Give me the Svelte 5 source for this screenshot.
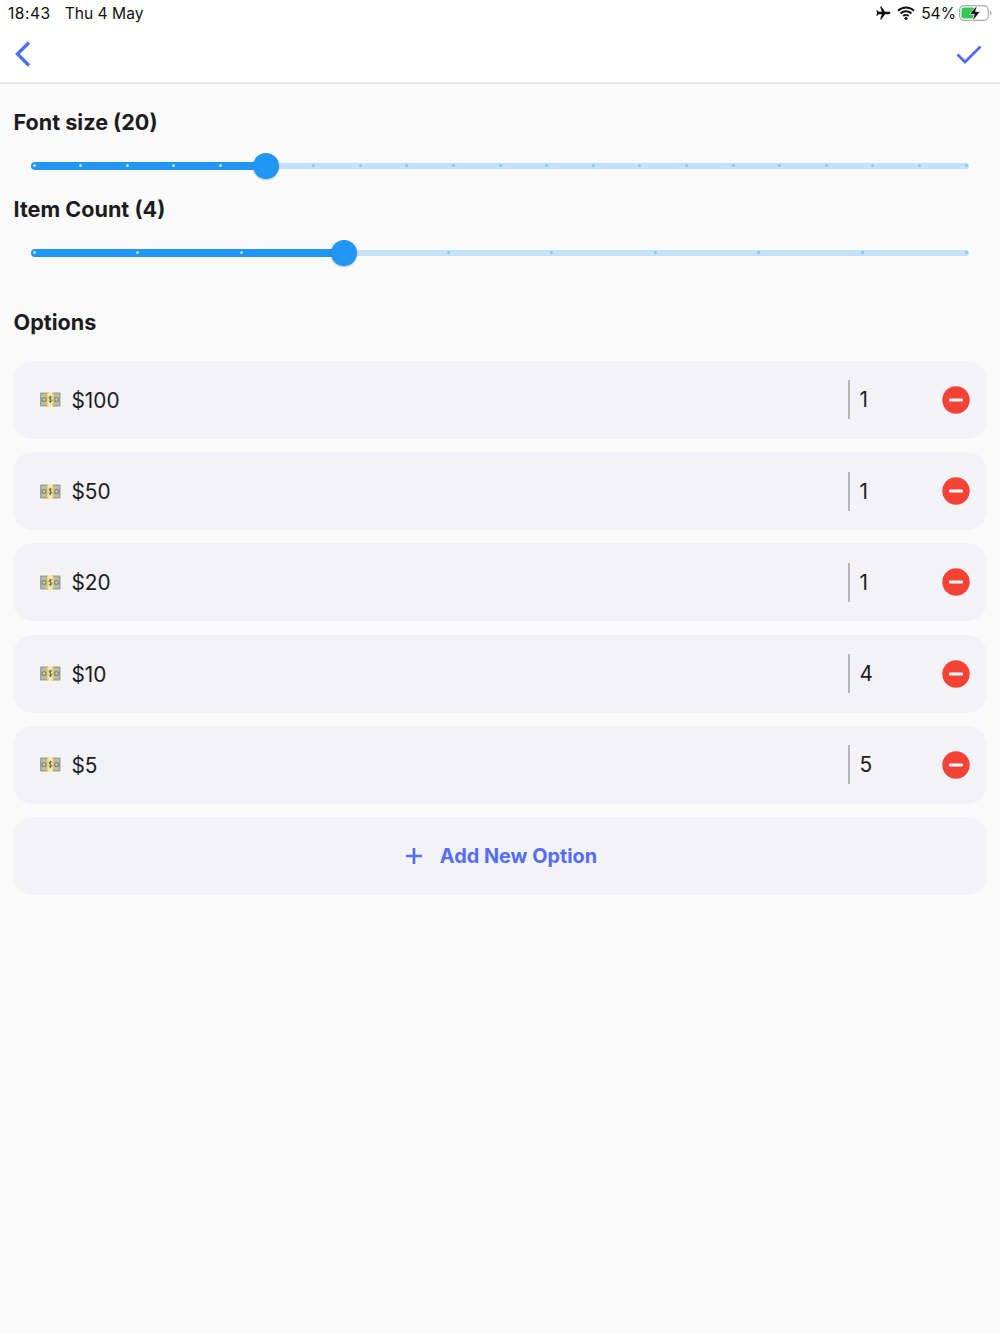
<script>
  const sliders = [
    { label: 'Font size (20)', intervals: 20, thumb: 5 },
    { label: 'Item Count (4)', intervals: 9, thumb: 3 }
  ];
  const options = [
    { name: '$100', qty: 1 },
    { name: '$50', qty: 1 },
    { name: '$20', qty: 1 },
    { name: '$10', qty: 4 },
    { name: '$5', qty: 5 }
  ];
  const range = (n) => Array.from({ length: n + 1 }, (_, i) => i);
  const pct = (i, n) => (i / n) * 100;
</script>

<div class="page">
  <header class="top">
    <div class="status">
      <div class="status-left"><span class="time">18:43</span><span>Thu 4 May</span></div>
      <div class="status-right">
        <svg class="plane" width="16" height="14" viewBox="0 0 16 14">
          <path d="M15.4 7c0-.7-.8-1.2-1.7-1.2H10L6.4.6H5.1l1.8 5.2H3.6L2.3 4.2H1.3l.8 2.8-.8 2.800h1l1.300-1.600h3.300L5.100 13.400h1.300L10 8.200h3.700c.9 0 1.700-.5 1.700-1.200z" fill="#111"/>
        </svg>
        <svg class="wifi" width="18" height="14" viewBox="0 0 18 14">
          <path d="M1 4.800a11.400 11.400 0 0 1 16 0M3.600 7.500a7.700 7.700 0 0 1 10.800 0M6.200 10.100a4 4 0 0 1 5.600 0" fill="none" stroke="#111" stroke-width="2"/>
          <path d="M9 10.400l2 2L9 14.200l-2-1.800z" fill="#111"/>
        </svg>
        <span class="pct">54%</span>
        <svg class="battery" width="34" height="18" viewBox="0 0 34 18">
          <rect x="0.700" y="1.700" width="28.600" height="14.600" rx="4" fill="none" stroke="#a8a8a8" stroke-width="1.200"/>
          <rect x="2.500" y="3.500" width="13" height="11" rx="2.200" fill="#36c759"/>
          <path d="M31 7v4c1-.2 1.600-1 1.600-2s-.6-1.800-1.600-2z" fill="#a8a8a8"/>
          <path d="M18.500.8 10.500 10.300h4.800l-2 7 8.100-9.700h-4.900z" fill="#111" stroke="#fff" stroke-width="0.700"/>
        </svg>
      </div>
    </div>
    <nav class="nav">
      <svg width="18" height="28" viewBox="0 0 18 28">
        <path d="M15 2.500 3.500 14 15 25.500" fill="none" stroke="#4f6ef7" stroke-width="3.400"/>
      </svg>
      <svg width="26" height="20" viewBox="0 0 26 20">
        <path d="M1.500 10.500 9 18 24.500 2.500" fill="none" stroke="#4f6ef7" stroke-width="2.800"/>
      </svg>
    </nav>
  </header>

  <main class="content">
    {#each sliders as s}
      <section class="setting">
        <h2>{s.label}</h2>
        <div class="slider">
          <div class="track">
            <div class="active" style="width: {pct(s.thumb, s.intervals)}%"></div>
            <div class="rail">
              {#each range(s.intervals) as i}
                <span
                  class="tick"
                  class:on={i <= s.thumb}
                  style="left: {pct(i, s.intervals)}%"
                ></span>
              {/each}
            </div>
            <span class="thumb" style="left: {pct(s.thumb, s.intervals)}%"></span>
          </div>
        </div>
      </section>
    {/each}

    <h2 class="options-title">Options</h2>

    <div class="list">
      {#each options as o}
        <div class="card">
          <svg class="money" width="22" height="15" viewBox="0 0 22 15">
            <rect x="1" y="0.500" width="20.500" height="14" rx="0.800" fill="#9fa290"/>
            <rect x="2.500" y="2" width="17.500" height="11" fill="#b9bcaa"/>
            <circle cx="5" cy="7.500" r="2.600" fill="#85887a"/>
            <circle cx="17.500" cy="7.500" r="2.600" fill="#85887a"/>
            <circle cx="5" cy="7.500" r="1.200" fill="#cfd1c0"/>
            <circle cx="17.500" cy="7.500" r="1.200" fill="#cfd1c0"/>
            <rect x="8" y="0" width="6.500" height="15" fill="#f4d33c"/>
            <rect x="9.300" y="0" width="4" height="15" fill="#f0ebc8"/>
            <path d="M12.900 5.300c-.5-.6-2.800-.8-2.900.6-.1 1.500 3 1 2.900 2.800-.1 1.300-2.500 1.200-3.100.4M11.300 3.700v7.600" fill="none" stroke="#5d5a3c" stroke-width="0.900"/>
          </svg>
          <span class="name">{o.name}</span>
          <span class="qty">{o.qty}</span>
          <svg class="remove" width="28" height="28" viewBox="0 0 28 28">
            <circle cx="14" cy="14" r="13.700" fill="#f44336"/>
            <rect x="7" y="12.500" width="14" height="3" rx="1.200" fill="#fff"/>
          </svg>
        </div>
      {/each}
      <div class="card add">
        <svg width="16" height="16" viewBox="0 0 16 16">
          <path d="M8 0v16M0 8h16" stroke="#536dfe" stroke-width="2.600"/>
        </svg>
        <span>Add New Option</span>
      </div>
    </div>
  </main>
</div>

<style>
  :global(body) {
    margin: 0;
    background: #fafafa;
  }
  .page {
    width: 1000px;
    height: 1334px;
    background: #fafafa;
    color: #1c1c1e;
    font-family: Inter, "Liberation Sans", sans-serif;
    overflow: hidden;
  }
  .top {
    height: 82px;
    background: #fff;
    border-bottom: 2px solid #e9e9e9;
  }
  .status {
    height: 26px;
    display: flex;
    justify-content: space-between;
    align-items: center;
    padding: 0 8px;
    font-size: 15.600px;
    color: #111;
  }
  .status-left {
    display: flex;
    gap: 14px;
  }
  .time {
    letter-spacing: 0.500px;
  }
  .status-right {
    display: flex;
    align-items: center;
    gap: 6px;
    margin-right: -1px;
  }
  .pct {
    margin-left: 0;
  }
  .battery {
    margin-left: -3px;
  }
  .nav {
    height: 56px;
    display: flex;
    justify-content: space-between;
    align-items: center;
    padding: 0 18px 0 14px;
  }
  .content {
    padding: 25px 13px 0;
  }
  h2 {
    margin: 0;
    padding-bottom: 2px;
    padding-left: 0.500px;
    font-size: 21.600px;
    line-height: 26px;
    font-weight: 700;
    color: #1c1c1e;
  }
  .setting {
    height: 87.300px;
  }
  .slider {
    padding: 0 18px;
    height: 57px;
    display: flex;
    align-items: center;
  }
  .track {
    position: relative;
    flex: 1;
    height: 6px;
    background: #c3e1fa;
    border-radius: 3px;
  }
  .rail {
    position: absolute;
    left: 3px;
    right: 3px;
    top: 0;
    bottom: 0;
  }
  .active {
    position: absolute;
    left: 0;
    top: -1px;
    height: 8px;
    background: #2196f3;
    border-radius: 4px 0 0 4px;
  }
  .tick {
    position: absolute;
    top: 1.500px;
    width: 3px;
    height: 3px;
    margin-left: -1.500px;
    border-radius: 50%;
    background: #8cc4f1;
  }
  .tick.on {
    background: #bbdefb;
  }
  .thumb {
    position: absolute;
    top: 3px;
    width: 26px;
    height: 26px;
    transform: translate(-13px, -13px);
    border-radius: 50%;
    background: #2196f3;
    box-shadow: 0 1px 2px rgba(0, 0, 0, 0.25);
  }
  .options-title {
    margin-top: 25.400px;
  }
  .list {
    margin-top: 24px;
    display: flex;
    flex-direction: column;
    gap: 13.200px;
  }
  .card {
    height: 78px;
    box-sizing: border-box;
    background: #f2f2f7;
    border-radius: 20px;
    display: flex;
    align-items: center;
    padding: 0 17.500px 0 26px;
    font-size: 20.800px;
  }
  .name {
    margin-left: 10.500px;
    flex: 1;
    padding-top: 1px;
  }
  .qty {
    width: 93.500px;
    height: 39px;
    line-height: 40px;
    box-sizing: border-box;
    border-left: 2px solid #b5b5b8;
    padding-left: 9.500px;
  }
  .add {
    justify-content: center;
    gap: 18px;
    padding: 0 0 0 3px;
    color: #536dfe;
    font-weight: 700;
    font-size: 19.850px;
  }
</style>
